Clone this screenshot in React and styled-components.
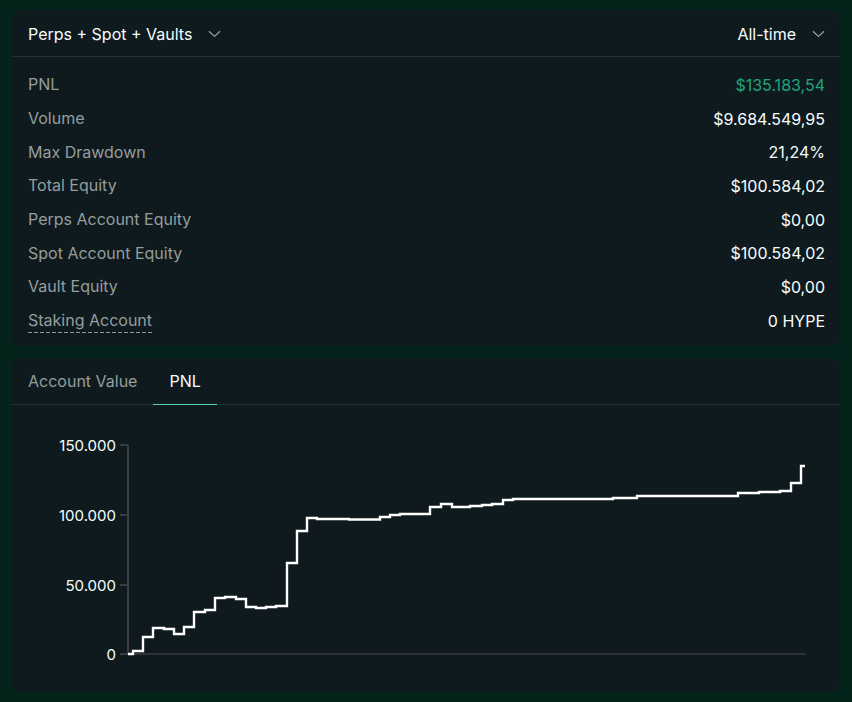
import React from 'react';
import styled, { createGlobalStyle } from 'styled-components';

const GlobalStyle = createGlobalStyle`
  html, body {
    margin: 0;
    padding: 0;
    background: #04231b;
  }
  body {
    font-family: Inter, "Noto Sans", sans-serif;
    color: #f6fefd;
    -webkit-font-smoothing: antialiased;
  }
`;

const Page = styled.div`
  display: flex;
  flex-direction: column;
  gap: 12px;
  padding: 10px 12px;
  width: 852px;
  height: 702px;
  box-sizing: border-box;
`;

const Card = styled.section`
  background: #0f1a1f;
  border-radius: 10px;
  display: flex;
  flex-direction: column;
  overflow: hidden;
  flex: ${p => (p.$grow ? '1 1 0' : 'none')};
  min-height: 0;
`;

const Header = styled.div`
  display: flex;
  align-items: center;
  justify-content: space-between;
  height: 44px;
  padding: 2px 15px 0 16px;
  border-bottom: 1px solid #273035;
  flex-shrink: 0;
`;

const Select = styled.div`
  display: flex;
  align-items: center;
  gap: 16px;
  font-size: 16px;
  color: #f6fefd;
`;

const Chevron = () => (
  <svg width="13" height="8" viewBox="0 0 13 8" fill="none">
    <path d="M1 1.2 L6.5 6.5 L12 1.2" stroke="#949e9c" strokeWidth="1.2" />
  </svg>
);

const Rows = styled.div`
  display: flex;
  flex-direction: column;
  padding: 11px 15px 8px 16px;
`;

const Row = styled.div`
  display: flex;
  align-items: center;
  justify-content: space-between;
  height: 33.7px;
  font-size: 16px;
`;

const Label = styled.span`
  color: #949e9c;
  line-height: 19px;
  padding-bottom: ${p => (p.$dashed ? '3px' : '0')};
  margin-bottom: ${p => (p.$dashed ? '-3px' : '0')};
  background-image: ${p =>
    p.$dashed
      ? 'repeating-linear-gradient(to right, #8f9896 0 4px, transparent 4px 6px)'
      : 'none'};
  background-size: 100% 1px;
  background-position: bottom left;
  background-repeat: no-repeat;
`;

const Value = styled.span`
  color: ${p => (p.$positive ? '#1fa67d' : '#f6fefd')};
`;

const Tabs = styled.div`
  display: flex;
  height: 46px;
  flex-shrink: 0;
  border-bottom: 1px solid #273035;
`;

const Tab = styled.div`
  display: flex;
  align-items: center;
  padding: 0 16px;
  font-size: 16px;
  color: ${p => (p.$active ? '#f6fefd' : '#949e9c')};
  box-shadow: ${p => (p.$active ? 'inset 0 -1px 0 #50d2c1' : 'none')};
  margin-bottom: -1px;
`;

const ChartWrap = styled.div`
  flex: 1 1 0;
  min-height: 0;
  overflow: hidden;
`;

const stats = [
  { label: 'PNL', value: '$135.183,54', positive: true },
  { label: 'Volume', value: '$9.684.549,95' },
  { label: 'Max Drawdown', value: '21,24%' },
  { label: 'Total Equity', value: '$100.584,02' },
  { label: 'Perps Account Equity', value: '$0,00' },
  { label: 'Spot Account Equity', value: '$100.584,02' },
  { label: 'Vault Equity', value: '$0,00' },
  { label: 'Staking Account', value: '0 HYPE', dashed: true },
];

// step points in chart coordinates (x, y) where the value changes
const steps = [
  [116, 249], [121, 246], [131, 232], [141, 223], [152, 224], [162, 229], [172, 222],
  [182, 207], [193, 205], [203, 193], [213, 192], [224, 194], [234, 202], [244, 203],
  [254, 202], [264, 201], [275, 158], [285, 126], [295, 113], [305, 114], [337, 114.5],
  [368, 112], [378, 110], [388, 109], [418, 102], [429, 99], [440, 102], [458, 101],
  [470, 100], [480, 99], [491, 95], [501, 94], [538, 94], [601, 93], [625, 91],
  [726, 88], [747, 87], [768, 86], [779, 78], [789, 61],
];

const ticks = [
  { label: '150.000', y: 40 },
  { label: '100.000', y: 110 },
  { label: '50.000', y: 180 },
  { label: '0', y: 249 },
];

const PnlChart = () => {
  let d = `M${steps[0][0]},${steps[0][1]}`;
  for (let i = 1; i < steps.length; i++) {
    d += ` H${steps[i][0]} V${steps[i][1]}`;
  }
  d += ' H793';
  return (
    <svg width="828" height="287" viewBox="0 0 828 287">
      <line x1="116" y1="40" x2="116" y2="250" stroke="#3a3d3f" strokeWidth="2" />
      <line x1="116" y1="249" x2="794" y2="249" stroke="#3a3d3f" strokeWidth="1.5" />
      {ticks.map(t => (
        <g key={t.label}>
          <line x1="108" y1={t.y} x2="116" y2={t.y} stroke="#3a3d3f" strokeWidth="2" />
          <text
            x="104"
            y={t.y}
            textAnchor="end"
            dominantBaseline="central"
            fill="#f6fefd"
            fontSize="15"
            fontFamily="Inter, sans-serif"
          >
            {t.label}
          </text>
        </g>
      ))}
      <path d={d} fill="none" stroke="#ffffff" strokeWidth="2.4" strokeLinejoin="miter" />
    </svg>
  );
};

const App = () => (
  <>
    <GlobalStyle />
    <Page>
      <Card>
        <Header>
          <Select>
            Perps + Spot + Vaults <Chevron />
          </Select>
          <Select>
            All-time <Chevron />
          </Select>
        </Header>
        <Rows>
          {stats.map(s => (
            <Row key={s.label}>
              <Label $dashed={s.dashed}>{s.label}</Label>
              <Value $positive={s.positive}>{s.value}</Value>
            </Row>
          ))}
        </Rows>
      </Card>
      <Card $grow>
        <Tabs>
          <Tab>Account Value</Tab>
          <Tab $active>PNL</Tab>
        </Tabs>
        <ChartWrap>
          <PnlChart />
        </ChartWrap>
      </Card>
    </Page>
  </>
);

export default App;
